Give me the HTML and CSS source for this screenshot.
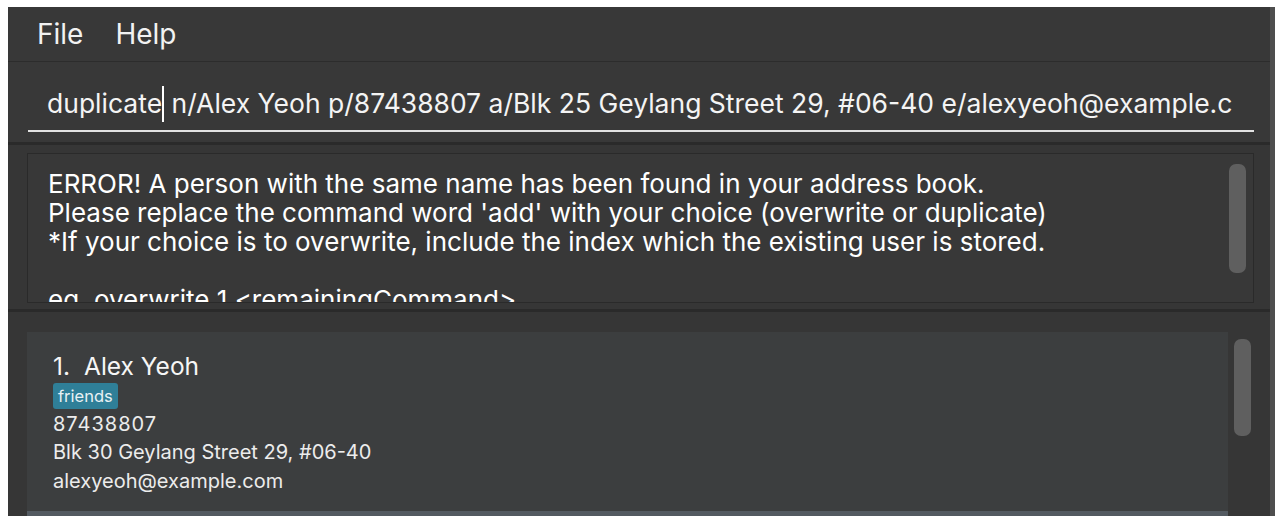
FILE: index.html
```html
<!DOCTYPE html>
<html>
<head>
<meta charset="utf-8">
<link rel="stylesheet" href="styles.css">
</head>
<body>
<div class="window">
  <div class="menubar">
    <span class="menu-item">File</span>
    <span class="menu-item">Help</span>
  </div>
  <div class="command-pane">
    <div class="command-field"><span>duplicate</span><span class="caret"></span><span>&nbsp;n/Alex Yeoh p/87438807 a/Blk 25 Geylang Street 29, #06-40 e/alexyeoh@example.c</span></div>
  </div>
  <div class="divider"></div>
  <div class="result-pane">
    <div class="result-box">
      <div class="result-text">
        <div>ERROR! A person with the same name has been found in your address book.</div>
        <div>Please replace the command word 'add' with your choice (overwrite or duplicate)</div>
        <div>*If your choice is to overwrite, include the index which the existing user is stored.</div>
        <div class="blank">&nbsp;</div>
        <div>eg. overwrite 1 &lt;remainingCommand&gt;</div>
      </div>
      <div class="scrollbar result-scroll"><div class="thumb result-thumb"></div></div>
    </div>
  </div>
  <div class="divider"></div>
  <div class="list-pane">
    <div class="list">
      <div class="card">
        <div class="name"><span class="index">1.</span><span>Alex Yeoh</span></div>
        <div class="tags"><span class="tag">friends</span></div>
        <div class="detail phone">87438807</div>
        <div class="detail">Blk 30 Geylang Street 29, #06-40</div>
        <div class="detail">alexyeoh@example.com</div>
      </div>
      <div class="card odd"></div>
    </div>
    <div class="scrollbar list-scroll"><div class="thumb list-thumb"></div></div>
  </div>
</div>
</body>
</html>
```
FILE: styles.css
```css
html, body {
  margin: 0;
  padding: 0;
  background: #ffffff;
}
body {
  padding: 7px 0 0 8px;
  font-family: "Inter", "Liberation Sans", sans-serif;
  color: #ffffff;
}
.window {
  width: 1262px;
  height: 509px;
  border-right: 5px solid #4e4e4e;
  background: #383838;
  display: flex;
  flex-direction: column;
  overflow: hidden;
}
.menubar {
  height: 54px;
  flex: none;
  display: flex;
  align-items: center;
  gap: 32px;
  padding-left: 29px;
  background: #383838;
  border-bottom: 1px solid #2c2c2c;
}
.menu-item {
  font-size: 28px;
  color: #f2f2f2;
  line-height: 34px;
}
.command-pane {
  height: 80px;
  flex: none;
  padding: 0 16px 0 20px;
  background: #383838;
  display: flex;
  flex-direction: column;
}
.command-field {
  margin-top: 14px;
  height: 54px;
  border-bottom: 2px solid #e2e2e2;
  padding-left: 19px;
  font-size: 26.5px;
  line-height: 54px;
  color: #f4f4f4;
  white-space: nowrap;
  overflow: hidden;
  display: flex;
}
.caret {
  width: 0;
  border-left: 2px solid #ffffff;
  height: 36px;
  align-self: center;
  margin-top: 2px;
}
.divider {
  height: 3px;
  flex: none;
  background: #2a2a2a;
}
.result-pane {
  height: 164px;
  flex: none;
  padding: 8px 16px 0 19px;
  background: #363636;
  box-sizing: border-box;
}
.result-box {
  height: 150px;
  box-sizing: border-box;
  border: 1px solid #2a2a2a;
  background: #383838;
  display: flex;
  overflow: hidden;
}
.result-text {
  flex: 1;
  padding: 15px 0 0 20px;
  font-size: 26px;
  line-height: 29px;
  color: #ffffff;
  white-space: nowrap;
  overflow: hidden;
}
.scrollbar {
  flex: none;
  display: flex;
  flex-direction: column;
}
.result-scroll {
  width: 24px;
  padding-top: 10px;
}
.thumb {
  background: #5f5f5f;
  border-radius: 7px;
}
.result-thumb {
  width: 17px;
  height: 109px;
}
.list-pane {
  flex: 1;
  display: flex;
  padding: 20px 0 0 19px;
  background: #363636;
}
.list {
  width: 1201px;
  display: flex;
  flex-direction: column;
}
.card {
  height: 179px;
  flex: none;
  box-sizing: border-box;
  background: #3c3e3f;
  padding: 19px 0 0 26px;
  display: flex;
  flex-direction: column;
  align-items: flex-start;
}
.card.odd {
  background: #535a61;
  height: 40px;
}
.name {
  font-size: 24.5px;
  line-height: 30px;
  color: #f6f6f6;
  display: flex;
}
.index {
  margin-right: 14px;
}
.tags {
  margin-top: 2px;
  display: flex;
}
.tag {
  background: #2f7f98;
  color: #e9f1f4;
  font-size: 16.5px;
  line-height: 20px;
  padding: 3px 5px;
  border-radius: 3px;
}
.detail {
  font-size: 20px;
  line-height: 29px;
  color: #ececec;
}
.phone {
  letter-spacing: 1px;
  margin-top: 1px;
  margin-bottom: -1px;
}
.list-scroll {
  width: 42px;
  padding: 7px 0 0 6px;
  box-sizing: border-box;
}
.list-thumb {
  width: 17px;
  height: 97px;
}
```
